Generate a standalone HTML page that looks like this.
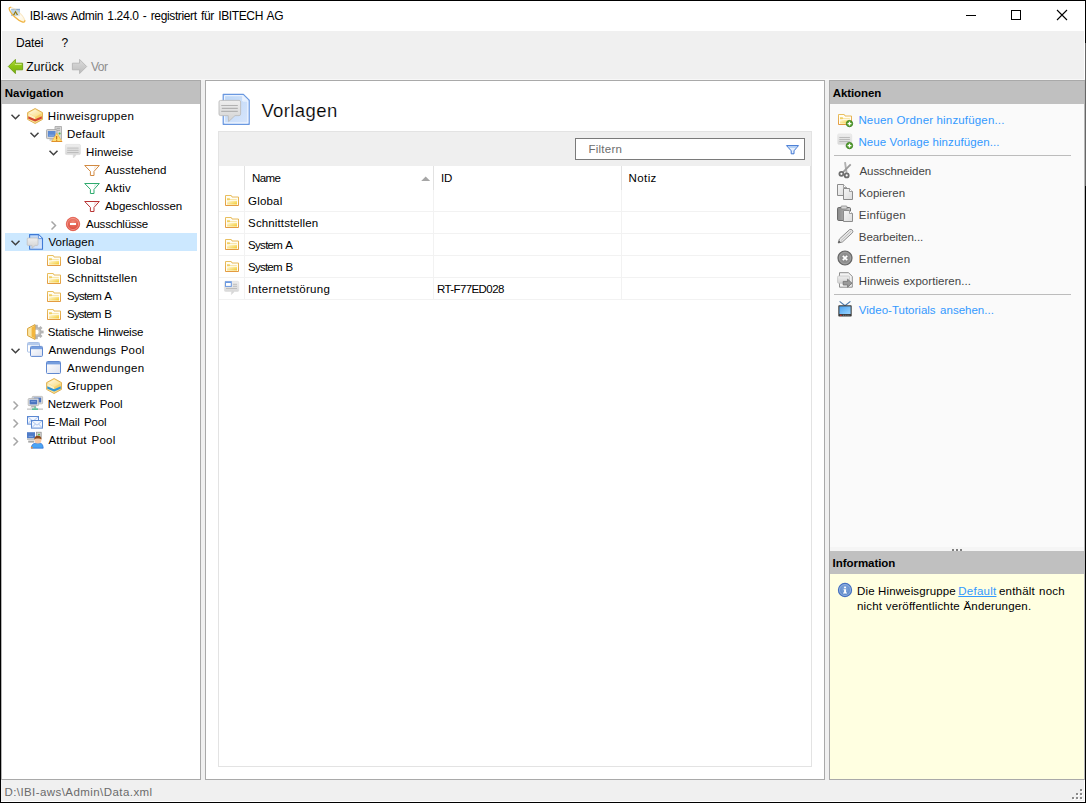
<!DOCTYPE html>
<html lang="de"><head><meta charset="utf-8"><title>IBI-aws Admin</title>
<style>
html,body{margin:0;padding:0}
body{width:1086px;height:803px;position:relative;overflow:hidden;background:#f0f0f0;font-family:"Liberation Sans",sans-serif;font-size:11.5px;color:#000}
.b{position:absolute;box-sizing:border-box}
.t{position:absolute;white-space:pre;color:#000}
.t.dis{color:#8d8d8d}
.t.ph{color:#6d6d6d}
.t.lnk{color:#3399ff}
.t.u{text-decoration:underline}
.t.act{color:#454545}
.t.st{color:#6b6b6b}
svg{position:absolute;overflow:visible}
.t.hd{-webkit-text-stroke:0.18px #fff}

</style></head><body>
<!-- window frame -->
<div class="b" style="left:0;top:0;width:1086px;height:803px;border:1px solid #000"></div>
<div class="b" style="left:1085px;top:43px;width:1px;height:143px;background:#666"></div>
<!-- title bar -->
<div class="b" style="left:1px;top:1px;width:1084px;height:30px;background:#fff"></div>
<div class="b" style="left:1px;top:31px;width:1px;height:49px;background:#fff"></div>
<div class="b" style="left:1084px;top:31px;width:1px;height:49px;background:#fff"></div>
<div class="b" style="left:1px;top:79px;width:1084px;height:1px;background:#f8f8f8"></div>
<!-- window controls -->
<div class="b" style="left:966px;top:15px;width:10px;height:1px;background:#000"></div>
<div class="b" style="left:1011px;top:10px;width:10px;height:10px;border:1px solid #000"></div>
<svg style="left:1057px;top:10px" width="10" height="10" viewBox="0 0 10 10"><path d="M0 0L10 10M10 0L0 10" stroke="#000" stroke-width="1.1" fill="none"/></svg>

<!-- left panel -->
<div class="b" style="left:1px;top:80px;width:200px;height:700px;background:#fff;border:1px solid #a9a9a9;border-left-color:#b5b5b5"></div>
<div class="b" style="left:2px;top:81px;width:198px;height:23px;background:#c0c0c0"></div>
<div class="b" style="left:5px;top:233px;width:192px;height:18px;background:#cce8ff"></div>

<!-- center panel -->
<div class="b" style="left:205px;top:80px;width:620px;height:700px;background:#fff;border:1px solid #a9a9a9"></div>
<div class="b" style="left:218px;top:131px;width:594px;height:636px;border:1px solid #e3e3e3;background:#fff"></div>
<div class="b" style="left:219px;top:132px;width:592px;height:34px;background:#efefef"></div>
<div class="b" style="left:575px;top:138px;width:230px;height:22px;background:#fff;border:1px solid #7a7a7a"></div>
<!-- header column separators -->
<div class="b" style="left:244px;top:166px;width:1px;height:24px;background:#e2e2e2"></div>
<div class="b" style="left:433px;top:166px;width:1px;height:24px;background:#e2e2e2"></div>
<div class="b" style="left:621px;top:166px;width:1px;height:24px;background:#e2e2e2"></div>
<div class="b" style="left:810px;top:166px;width:1px;height:24px;background:#e2e2e2"></div>
<!-- body column separators -->
<div class="b" style="left:244px;top:190px;width:1px;height:110px;background:#f2f2f2"></div>
<div class="b" style="left:433px;top:190px;width:1px;height:110px;background:#f2f2f2"></div>
<div class="b" style="left:621px;top:190px;width:1px;height:110px;background:#f2f2f2"></div>
<div class="b" style="left:810px;top:190px;width:1px;height:110px;background:#f2f2f2"></div>
<!-- row lines -->
<div class="b" style="left:219px;top:211px;width:592px;height:1px;background:#f2f2f2"></div>
<div class="b" style="left:219px;top:233px;width:592px;height:1px;background:#f2f2f2"></div>
<div class="b" style="left:219px;top:255px;width:592px;height:1px;background:#f2f2f2"></div>
<div class="b" style="left:219px;top:277px;width:592px;height:1px;background:#f2f2f2"></div>
<div class="b" style="left:219px;top:299px;width:592px;height:1px;background:#f2f2f2"></div>
<!-- sort arrow -->
<svg style="left:421px;top:176px" width="10" height="5" viewBox="0 0 10 5"><path d="M0.2 5L4.7 0.4L9.2 5Z" fill="#a6a6a6"/></svg>

<!-- right panel -->
<div class="b" style="left:829px;top:80px;width:256px;height:700px;background:#fafafa;border:1px solid #a9a9a9;border-right-color:#b8b8b8"></div>
<div class="b" style="left:830px;top:81px;width:254px;height:23px;background:#c0c0c0"></div>
<div class="b" style="left:834px;top:155px;width:237px;height:1px;background:#bcbcbc"></div>
<div class="b" style="left:834px;top:294px;width:237px;height:1px;background:#bcbcbc"></div>
<div class="b" style="left:830px;top:547px;width:254px;height:4px;background:#f5f5f5"></div>
<div class="b" style="left:952px;top:549px;width:2px;height:2px;background:#808080"></div>
<div class="b" style="left:956px;top:549px;width:2px;height:2px;background:#808080"></div>
<div class="b" style="left:960px;top:549px;width:2px;height:2px;background:#808080"></div>
<div class="b" style="left:830px;top:551px;width:254px;height:23px;background:#c0c0c0"></div>
<div class="b" style="left:830px;top:574px;width:254px;height:205px;background:#ffffe1"></div>

<!-- status bar -->
<div class="b" style="left:1px;top:801px;width:1084px;height:1px;background:#fff"></div>
<div class="b" style="left:1084px;top:780px;width:1px;height:22px;background:#fff"></div>
<!-- size grip -->
<svg style="left:1072px;top:788px" width="12" height="12" viewBox="0 0 12 12" shape-rendering="crispEdges">
<g fill="#fff"><rect x="9" y="2" width="2" height="2"/><rect x="5" y="6" width="2" height="2"/><rect x="9" y="6" width="2" height="2"/><rect x="1" y="10" width="2" height="2"/><rect x="5" y="10" width="2" height="2"/><rect x="9" y="10" width="2" height="2"/></g>
<g fill="#8c8c8c"><rect x="8" y="1" width="2" height="2"/><rect x="4" y="5" width="2" height="2"/><rect x="8" y="5" width="2" height="2"/><rect x="0" y="9" width="2" height="2"/><rect x="4" y="9" width="2" height="2"/><rect x="8" y="9" width="2" height="2"/></g>
</svg>
<svg style="left:0;top:0" width="1086" height="803" viewBox="0 0 1086 803">
<defs>
<linearGradient id="gFold" x1="0" y1="0" x2="1" y2="1"><stop offset="0" stop-color="#fffbe6"/><stop offset="1" stop-color="#f3c928"/></linearGradient>
<linearGradient id="gFoldS" x1="0" y1="0" x2="0" y2="1"><stop offset="0" stop-color="#e6b84e"/><stop offset="1" stop-color="#e0902c"/></linearGradient>
<linearGradient id="gGreen" x1="0" y1="0" x2="0" y2="1"><stop offset="0" stop-color="#b4dc3c"/><stop offset="0.5" stop-color="#8cc414"/><stop offset="1" stop-color="#7ab010"/></linearGradient>
<linearGradient id="gGray" x1="0" y1="0" x2="0" y2="1"><stop offset="0" stop-color="#dcdcdc"/><stop offset="1" stop-color="#bcbcbc"/></linearGradient>
<linearGradient id="gBub" x1="0" y1="0" x2="0" y2="1"><stop offset="0" stop-color="#eeeeee"/><stop offset="1" stop-color="#d2d2d2"/></linearGradient>
<linearGradient id="gPage" x1="0" y1="0" x2="1" y2="1"><stop offset="0" stop-color="#bcd6f6"/><stop offset="1" stop-color="#d8e6fc"/></linearGradient>
<linearGradient id="gWin" x1="0" y1="0" x2="1" y2="1"><stop offset="0" stop-color="#ffffff"/><stop offset="1" stop-color="#dde2f0"/></linearGradient>
<linearGradient id="gDoc" x1="0" y1="0" x2="1" y2="1"><stop offset="0" stop-color="#f6f6f6"/><stop offset="1" stop-color="#dcdcdc"/></linearGradient>
<linearGradient id="gClip" x1="0" y1="0" x2="1" y2="0"><stop offset="0" stop-color="#8a8a8a"/><stop offset="1" stop-color="#c4c4c4"/></linearGradient>
<linearGradient id="gTv" x1="0" y1="0" x2="1" y2="1"><stop offset="0" stop-color="#4aa2f0"/><stop offset="1" stop-color="#9ad4ff"/></linearGradient>
<radialGradient id="gRed" cx="0.5" cy="0.35" r="0.7"><stop offset="0" stop-color="#f08a78"/><stop offset="1" stop-color="#d83a2c"/></radialGradient>
<radialGradient id="gInfo" cx="0.5" cy="0.4" r="0.6"><stop offset="0" stop-color="#86aadc"/><stop offset="1" stop-color="#5480c4"/></radialGradient>
<linearGradient id="gLens" x1="0" y1="0" x2="1" y2="0"><stop offset="0" stop-color="#fff6dc" stop-opacity="0.2"/><stop offset="0.45" stop-color="#fff6dc" stop-opacity="0.35"/><stop offset="0.7" stop-color="#fffaf0" stop-opacity="0.95"/><stop offset="1" stop-color="#fff4d4" stop-opacity="1"/></linearGradient>
<linearGradient id="gHexT" x1="0" y1="0" x2="1" y2="1"><stop offset="0" stop-color="#fffae8"/><stop offset="1" stop-color="#f9dc7c"/></linearGradient>

<!-- 14x11 folder, origin top-left -->
<g id="folder">
 <path d="M0.5 0.5H6.3L7 2H13.5V10.5H0.5Z" fill="#fffdf3" stroke="url(#gFoldS)" stroke-width="0.9"/>
 <path d="M2 3.2H4.6L5.2 3.9H11.8V4.6H5.2L4.6 5.2H2Z" fill="#f1d064"/>
 <path d="M2 6.6L5.2 5.7H12V9.6H2Z" fill="url(#gFold)"/>
</g>
<!-- hex box 16x16 -->
<g id="hexbase">
 <path d="M8.1 0.5L15.5 4.6V11.4L8.1 15.5L0.6 11.4V4.6Z" fill="#f8dc8a" stroke="#dcaa4a" stroke-width="0.9" stroke-linejoin="round"/>
 <path d="M8.1 1.5L14.4 5L8.1 8.7L1.7 5Z" fill="url(#gHexT)"/>
 <path d="M1.5 5.6L8.1 9.3V11.4L1.5 8.4Z" fill="#fdf0c2"/>
 <path d="M14.7 5.6L8.1 9.3V11.4L14.7 8.4Z" fill="#f6d068"/>
 <path d="M1.5 11L8.1 13.9V14.6L1.5 11.4Z" fill="#fbe6a0"/>
</g>
<g id="chevD"><path d="M-4 -1.9L0 2.1L4 -1.9" fill="none" stroke="#404040" stroke-width="1.5"/></g>
<g id="chevR"><path d="M-2 -4L2 0L-2 4" fill="none" stroke="#a6a6a6" stroke-width="1.5"/></g>
<g id="funnel"><path d="M0.7 0.5H15.3L10 6.4V10.5H6.4V6.4Z" fill="#fff" stroke="currentColor" stroke-width="1" stroke-linejoin="round"/><path d="M9.6 5.2L13.4 1.3H10.5Z" fill="currentColor" opacity="0.18"/></g>
<g id="plus"><circle cx="0" cy="0" r="3.15" fill="#5aa432" stroke="#357a1c" stroke-width="0.9"/><path d="M-1.9 0H1.9M0 -1.9V1.9" stroke="#fff" stroke-width="1.3"/></g>
<g id="doc"><path d="M0.5 0.5H6.5L9.5 3.5V11.5H0.5Z" fill="url(#gDoc)" stroke="#8c8c8c" stroke-width="1"/><path d="M6.5 0.5V3.5H9.5" fill="#fff" stroke="#8c8c8c" stroke-width="0.8"/></g>
</defs>

<!-- title icon -->
<rect x="11.2" y="9" width="8.8" height="6.9" fill="#a6caf2"/>
<path d="M11.2 9.3H20" stroke="#7c9cc0" stroke-width="0.9"/>
<path d="M11.2 15.6H20" stroke="#8db0dc" stroke-width="0.6"/>
<g transform="rotate(43 17 14.7) translate(17 14.7)">
 <ellipse cx="0" cy="0" rx="10.3" ry="3.2" fill="url(#gLens)" stroke="#f6d79a" stroke-opacity="0.55" stroke-width="1"/>
 <path d="M9.3 -1.4A10.3 3.2 0 1 1 -9.3 -1.4" fill="none" stroke="#f0b444" stroke-width="1.15"/>
</g>
<path d="M15.5 10.4L18.2 15H16.7L15.5 12.7L14.5 15H13Z" fill="#947c14"/>
<!-- toolbar arrows -->
<path d="M8.3 66.5L15.4 59.4V63.2H22.6V69.8H15.4V73.6Z" fill="url(#gGreen)" stroke="#6d9e14" stroke-width="0.9" stroke-linejoin="round"/>
<path d="M14.9 64.4H21.6" stroke="#d6ee8c" stroke-width="1"/>
<path d="M86.7 66.5L79.6 59.4V63.2H72.4V69.8H79.6V73.6Z" fill="url(#gGray)" stroke="#b4b4b4" stroke-width="0.9" stroke-linejoin="round"/>

<!-- tree chevrons -->
<use href="#chevD" x="15.5" y="116.6"/>
<use href="#chevD" x="34.5" y="134.6"/>
<use href="#chevD" x="53.5" y="152.6"/>
<use href="#chevR" x="53.5" y="225.5"/>
<use href="#chevD" x="15.5" y="242.6"/>
<use href="#chevD" x="15.5" y="350.6"/>
<use href="#chevR" x="15.5" y="405.5"/>
<use href="#chevR" x="15.5" y="423.5"/>
<use href="#chevR" x="15.5" y="441.5"/>

<!-- Hinweisgruppen -->
<g transform="translate(27 108)"><use href="#hexbase"/><path d="M1.3 8.3L8.1 11.2L14.8 8.3V10.7L8.1 13.6L1.3 10.7Z" fill="#d4462f"/></g>
<!-- Default: tower + monitor + warning -->
<g transform="translate(46 126)">
 <path d="M9 0.5H15.5V13.5H9Z" fill="#d6d6d6" stroke="#a4a4a4" stroke-width="0.8"/>
 <path d="M10.5 2.3H14M10.5 4.3H14" stroke="#9a9a9a" stroke-width="0.8"/>
 <circle cx="13.6" cy="7.4" r="1" fill="#48b848"/>
 <rect x="0.5" y="3.6" width="10.4" height="9" rx="0.8" fill="#d8d8d8" stroke="#a0a0a0" stroke-width="0.8"/>
 <rect x="1.9" y="5" width="7.6" height="5.8" fill="#5c8ad2"/>
 <path d="M3 9.2H8" stroke="#8fb2e6" stroke-width="0.8"/>
 <path d="M3.5 13.2H8.5V14.6H3.5Z" fill="#bcbcbc"/>
 <path d="M10.8 7.2L16 15.5H5.8Z" fill="#ffe070" stroke="#eeb450" stroke-width="0.8" stroke-linejoin="round"/><path d="M5.6 15.5H16.1" stroke="#e0902a" stroke-width="1"/>
 <path d="M10.6 10V13" stroke="#c8741a" stroke-width="1.3"/><rect x="10" y="13.6" width="1.3" height="1.1" fill="#c8741a"/>
</g>
<!-- Hinweise bubble -->
<g transform="translate(65 144)">
 <path d="M1.6 0.4H14.2Q15.4 0.4 15.4 1.6V9.4Q15.4 10.6 14.2 10.6H11.6L8.4 14L8.2 10.6H1.6Q0.4 10.6 0.4 9.4V1.6Q0.4 0.4 1.6 0.4Z" fill="url(#gBub)" stroke="#dadada" stroke-width="0.6"/>
 <path d="M2.2 4.1H13.6M2.2 6.3H13.6M2.2 8.5H13.6" stroke="#b9b9b9" stroke-width="0.9"/>
</g>
<!-- funnels -->
<g transform="translate(84 165)" color="#d28a42"><use href="#funnel"/></g>
<g transform="translate(84 183)" color="#2fab6e"><use href="#funnel"/></g>
<g transform="translate(84 201)" color="#b83434"><use href="#funnel"/></g>
<!-- Ausschluesse -->
<circle cx="73" cy="224" r="6.7" fill="url(#gRed)" stroke="#e2594a" stroke-width="0.8"/>
<circle cx="73" cy="224" r="5.6" fill="none" stroke="#f4a89c" stroke-width="0.7"/>
<rect x="70" y="223" width="6" height="2" fill="#fff"/>
<!-- Vorlagen (small) -->
<g transform="translate(27 234)">
 <path d="M2.6 0.6H11.6L15.5 4.4V15.3H2.6Z" fill="url(#gPage)" stroke="#3f7ad6" stroke-width="1.1" stroke-linejoin="round"/>
 <path d="M11.4 1V4.6H15" fill="#e6f0fe" stroke="#3f7ad6" stroke-width="0.7"/>
 <path d="M1.2 4H10Q11 4 11 5V10.4Q11 11.4 10 11.4H8.2L5 14.2V11.4H1.2Q0.2 11.4 0.2 10.4V5Q0.2 4 1.2 4Z" fill="url(#gBub)" stroke="#bdbdbd" stroke-width="0.7"/>
</g>
<!-- tree folders -->
<use href="#folder" x="47" y="255"/>
<use href="#folder" x="47" y="273"/>
<use href="#folder" x="47" y="291"/>
<use href="#folder" x="47" y="309"/>
<!-- Statische Hinweise -->
<g transform="translate(27 324)">
 <g fill="#b4b4b4"><circle cx="9.4" cy="8" r="5.2"/>
 <rect x="8" y="0.8" width="2.8" height="14.4"/><rect x="8" y="0.8" width="2.8" height="14.4" transform="rotate(45 9.4 8)"/><rect x="8" y="0.8" width="2.8" height="14.4" transform="rotate(90 9.4 8)"/><rect x="8" y="0.8" width="2.8" height="14.4" transform="rotate(135 9.4 8)"/></g>
 <circle cx="9.4" cy="8" r="3.6" fill="#c8c8c8"/><circle cx="9.4" cy="8" r="2.2" fill="#fff"/>
 <path d="M8 0.6V15.4L0.6 11.6V4.5Z" fill="#fbe6a4" stroke="#d9a23a" stroke-width="1" stroke-linejoin="round"/>
 <path d="M8 1.6V14.4L4.6 12.6V3.4Z" fill="#f3b63e"/>
</g>
<!-- Anwendungs Pool -->
<g transform="translate(27 342)">
 <rect x="0.5" y="0.5" width="12" height="9.6" rx="1" fill="#fff" stroke="#a9c0e6" stroke-width="1"/>
 <rect x="1" y="1" width="11" height="2.2" fill="#b4caec"/>
 <rect x="3.5" y="4.4" width="12" height="10" rx="1" fill="url(#gWin)" stroke="#5f88d0" stroke-width="1"/>
 <rect x="4" y="4.9" width="11" height="2.3" fill="#769ede"/>
</g>
<!-- Anwendungen -->
<g transform="translate(46 361)">
 <rect x="0.5" y="0.5" width="14" height="12" rx="1" fill="url(#gWin)" stroke="#5f88d0" stroke-width="1"/>
 <rect x="1" y="1" width="13" height="2.4" fill="#769ede"/>
</g>
<!-- Gruppen -->
<g transform="translate(46 378)"><use href="#hexbase"/><path d="M1.3 8.3L8.1 11.2L14.8 8.3V10.7L8.1 13.6L1.3 10.7Z" fill="#2f95d6"/></g>
<!-- Netzwerk Pool -->
<g transform="translate(27 396)">
 <rect x="5.2" y="0.4" width="10.4" height="7.4" rx="0.8" fill="#e2e2e2" stroke="#b6b6b6" stroke-width="0.8"/>
 <rect x="6.6" y="1.6" width="7.6" height="4.8" fill="#4a74c0"/>
 <rect x="1.2" y="2.6" width="10.4" height="7" rx="0.8" fill="#e4e4e4" stroke="#b0b0b0" stroke-width="0.8"/>
 <rect x="2.6" y="3.8" width="7.6" height="4.6" fill="#4a74c0"/>
 <path d="M4 5.6H8.8" stroke="#86a6e0" stroke-width="0.8"/>
 <path d="M4.4 10H8.6L9.6 11.4H3.4Z" fill="#b4b4b4"/>
 <rect x="0" y="12.4" width="16" height="1.5" fill="#cdcdcd"/>
 <rect x="5" y="12.4" width="6" height="1.5" fill="#52c090"/><rect x="7.4" y="10.6" width="1.3" height="2" fill="#52c090"/>
</g>
<!-- E-Mail Pool -->
<g transform="translate(27 416)">
 <rect x="0.5" y="0.5" width="11" height="7.6" fill="#f2f7ff" stroke="#5a88d2" stroke-width="1"/>
 <path d="M1 1L6 5.2L11 1M1 7.6L4.4 4M11 7.6L7.6 4" fill="none" stroke="#9ab8e8" stroke-width="0.8"/>
 <rect x="4.5" y="4.5" width="11" height="7.6" fill="#f2f7ff" stroke="#5a88d2" stroke-width="1"/>
 <path d="M5 5L10 9.2L15 5M5 11.6L8.4 8M15 11.6L11.6 8" fill="none" stroke="#9ab8e8" stroke-width="0.8"/>
</g>
<!-- Attribut Pool -->
<g transform="translate(27 432)">
 <rect x="0" y="0.2" width="8" height="6.2" fill="#4f7cc8"/><path d="M1.6 4.4H6" stroke="#8eaee4" stroke-width="0.8"/>
 <rect x="0" y="6.4" width="8" height="1.6" fill="#c4c4c4"/><rect x="1.2" y="8.6" width="6" height="2" fill="#a8a8a8"/>
 <rect x="9.4" y="0.2" width="4.8" height="6" fill="#d0d0d0" stroke="#8c8c8c" stroke-width="0.7"/><circle cx="12" cy="2.6" r="0.9" fill="#3cb83c"/>
 <path d="M4.2 16.2Q4.6 11.4 8.6 11.2H13Q16 11.4 16.2 16.2Z" fill="#4aa4f4" stroke="#2c6cd0" stroke-width="0.7"/>
 <rect x="4" y="14.8" width="1.6" height="1.6" fill="#f09030"/>
 <circle cx="10.9" cy="7.9" r="3.5" fill="#f6c8a4"/>
 <path d="M7.2 7.6Q7.4 3.6 10.9 3.8Q14.4 3.6 14.6 7.6Q12.6 6 10.9 6.6Q9 6 7.2 7.6Z" fill="#8c4a1c"/>
</g>

<!-- big Vorlagen icon -->
<g transform="translate(218 93)">
 <path d="M5.2 1.3H25.4L31.2 7.2V31.3H5.2Z" fill="url(#gPage)" stroke="#6a98e0" stroke-width="1.2" stroke-linejoin="round"/>
 <path d="M6.6 2.7H24.8V8H29.8V29.9H6.6Z" fill="none" stroke="#f2f7ff" stroke-width="1"/>
 <path d="M25 2.2L25 7.6H30.4Z" fill="#eaf2fe"/>
 <path d="M2.6 7.4H21Q22.6 7.4 22.6 9V21Q22.6 22.6 21 22.6H17L10.6 28.6L10.2 22.6H2.6Q1 22.6 1 21V9Q1 7.4 2.6 7.4Z" fill="url(#gBub)" stroke="#bcbcbc" stroke-width="0.9"/>
 <path d="M3.2 12.5H19.8M3.8 15.4H19.8M3.2 18.4H19.8" stroke="#b2b2b2" stroke-width="1.1"/>
</g>
<!-- filter funnel -->
<path d="M786.5 145.6H798.5L794 150.8V153.8H791.2V150.8Z" fill="#e8f1fd" stroke="#3d74d2" stroke-width="1" stroke-linejoin="round"/>
<path d="M787.6 146.3H797.4L796 147.8H789Z" fill="#a9c8f2"/>
<!-- table icons -->
<use href="#folder" x="225" y="195"/>
<use href="#folder" x="225" y="217"/>
<use href="#folder" x="225" y="239"/>
<use href="#folder" x="225" y="261"/>
<g transform="translate(224 281)">
 <path d="M1.6 0.3H13.4Q14.8 0.3 14.8 1.6V9.2Q14.8 10.5 13.4 10.5H10.6L7.4 13.6V10.5H1.6Q0.4 10.5 0.4 9.2V1.6Q0.4 0.3 1.6 0.3Z" fill="url(#gBub)" stroke="#dcdcdc" stroke-width="0.6"/>
 <rect x="1" y="0.2" width="6.8" height="5.7" fill="#6c9ae2"/><rect x="2" y="2" width="4.8" height="2.9" fill="#fff"/>
 <path d="M9 3.3H13M9 5.3H13M2 7.5H13" stroke="#b9b9b9" stroke-width="0.9"/>
</g>

<!-- action icons -->
<use href="#folder" x="838" y="114"/><use href="#plus" x="849.5" y="123.6"/>
<g transform="translate(837.5 133.6)">
 <path d="M1.4 0.3H13Q14.2 0.3 14.2 1.5V9.7Q14.2 10.9 13 10.9H10.4L7.6 13.6V10.9H1.4Q0.2 10.9 0.2 9.7V1.5Q0.2 0.3 1.4 0.3Z" fill="url(#gBub)" stroke="#e0e0e0" stroke-width="0.6"/>
 <path d="M1.8 3.9H12.4M1.8 5.9H12.4M1.8 7.9H12.4" stroke="#b6b6b6" stroke-width="0.9"/>
</g><use href="#plus" x="849.5" y="145.6"/>
<!-- scissors -->
<g fill="none">
 <path d="M845 162.2L846.6 173" stroke="#b2b2b2" stroke-width="1.9"/>
 <path d="M850.7 164.4L842.6 172.6" stroke="#9c9c9c" stroke-width="1.8"/>
 <circle cx="841.4" cy="173.8" r="2" stroke="#6e6e6e" stroke-width="1.8"/>
 <circle cx="846.7" cy="175.4" r="2" stroke="#6e6e6e" stroke-width="1.8"/>
</g>
<!-- copy -->
<use href="#doc" x="837" y="184"/><use href="#doc" x="843" y="188"/>
<!-- paste -->
<rect x="837.5" y="207.5" width="13" height="13" rx="1.2" fill="url(#gClip)" stroke="#6c6c6c" stroke-width="1"/>
<rect x="841" y="206" width="6" height="3" rx="0.8" fill="#d8d8d8" stroke="#7a7a7a" stroke-width="0.7"/>
<use href="#doc" x="843" y="210"/>
<!-- pencil -->
<path d="M838.2 243L839.4 239L849.6 229.6Q851 228.8 852.4 230.2Q853.4 231.6 852.4 232.8L842.4 242Z" fill="#e6e6e6" stroke="#828282" stroke-width="0.9" stroke-linejoin="round"/>
<path d="M838.2 243L839 240.6L840.6 242.2Z" fill="#4a4a4a"/>
<path d="M841 240.6L851 231.2" stroke="#b4b4b4" stroke-width="0.8"/>
<!-- remove -->
<circle cx="845" cy="258" r="7" fill="#8e8e8e" stroke="#666" stroke-width="1.2"/>
<circle cx="845" cy="258" r="5.6" fill="none" stroke="#a8a8a8" stroke-width="0.7"/>
<path d="M842.8 255.8L847.2 260.2M847.2 255.8L842.8 260.2" stroke="#fff" stroke-width="1.7"/>
<!-- export -->
<path d="M839.5 272.7H848.4L852.3 276.4V287.2H839.5Z" fill="#f4f4f4" stroke="#828282" stroke-width="0.9"/>
<path d="M838.6 276H848.4Q849.6 276 849.6 277.2V282Q849.6 283.2 848.4 283.2H838.6Q837.6 283.2 837.6 282V277.2Q837.6 276 838.6 276Z" fill="url(#gBub)" stroke="#bdbdbd" stroke-width="0.7"/>
<path d="M843.2 281.4H847.6V279.2L852 283.2L847.6 287.2V285H843.2Z" fill="#9a9a9a" stroke="#6e6e6e" stroke-width="0.8" stroke-linejoin="round"/>
<!-- tv -->
<path d="M839.6 301.4L845 305.8L850.4 301.4" fill="none" stroke="#4a78a8" stroke-width="1.1"/>
<rect x="838.3" y="305.3" width="13.4" height="11.2" rx="0.8" fill="#3c3c3c"/>
<rect x="839.4" y="306.4" width="11.2" height="7.6" fill="url(#gTv)"/>
<rect x="840" y="314.8" width="1.6" height="1" fill="#e03030"/><path d="M843 315.3H850" stroke="#8a8a8a" stroke-width="0.8" stroke-dasharray="1 0.8"/>
<!-- info -->
<circle cx="845" cy="590" r="6.6" fill="url(#gInfo)" stroke="#446fc0" stroke-width="1.1"/>
<circle cx="845" cy="590" r="5.5" fill="none" stroke="#a4c0ea" stroke-width="0.7"/>
<rect x="844.1" y="586.6" width="1.9" height="1.6" fill="#fff"/>
<path d="M843.6 589.2H846V592.6H847V593.6H843V592.6H844.1V590.1H843.6Z" fill="#fff"/>
</svg>


<span class="t" style="left:29.80px;top:8.00px;letter-spacing:-0.363px;line-height:17px;word-spacing:1.3px;font-size:12px">IBI-aws Admin 1.24.0 - registriert für IBITECH AG</span>
<span class="t" style="left:16.00px;top:35.00px;letter-spacing:-0.123px;line-height:17px;font-size:12px">Datei</span>
<span class="t" style="left:61.60px;top:35.00px;letter-spacing:-0.787px;line-height:17px;font-size:12px">?</span>
<span class="t" style="left:26.20px;top:59.00px;letter-spacing:0.174px;line-height:17px;font-size:12px">Zurück</span>
<span class="t dis" style="left:91.08px;top:59.00px;letter-spacing:-0.549px;line-height:17px;font-size:12px">Vor</span>
<span class="t" style="left:4.83px;top:85.00px;letter-spacing:-0.015px;line-height:16px;font-weight:bold">Navigation</span>
<span class="t" style="left:832.82px;top:85.00px;letter-spacing:-0.107px;line-height:16px;font-weight:bold">Aktionen</span>
<span class="t" style="left:832.62px;top:555.00px;letter-spacing:-0.055px;line-height:16px;font-weight:bold">Information</span>
<span class="t" style="left:47.82px;top:108.00px;letter-spacing:0.270px;line-height:16px">Hinweisgruppen</span>
<span class="t" style="left:67.03px;top:126.00px;letter-spacing:0.202px;line-height:16px">Default</span>
<span class="t" style="left:86.03px;top:144.00px;letter-spacing:0.060px;line-height:16px">Hinweise</span>
<span class="t" style="left:105.03px;top:162.00px;letter-spacing:0.080px;line-height:16px">Ausstehend</span>
<span class="t" style="left:105.03px;top:180.00px;letter-spacing:0.226px;line-height:16px">Aktiv</span>
<span class="t" style="left:105.03px;top:198.00px;letter-spacing:-0.075px;line-height:16px">Abgeschlossen</span>
<span class="t" style="left:86.03px;top:216.00px;letter-spacing:-0.231px;line-height:16px">Ausschlüsse</span>
<span class="t" style="left:48.42px;top:234.00px;letter-spacing:0.034px;line-height:16px">Vorlagen</span>
<span class="t" style="left:67.03px;top:252.00px;letter-spacing:0.200px;line-height:16px">Global</span>
<span class="t" style="left:67.03px;top:270.00px;letter-spacing:0.125px;line-height:16px">Schnittstellen</span>
<span class="t" style="left:67.03px;top:288.00px;letter-spacing:-0.716px;line-height:16px;word-spacing:1.3px">System A</span>
<span class="t" style="left:67.03px;top:306.00px;letter-spacing:-0.794px;line-height:16px;word-spacing:1.3px">System B</span>
<span class="t" style="left:47.82px;top:324.00px;letter-spacing:-0.164px;line-height:16px;word-spacing:1.3px">Statische Hinweise</span>
<span class="t" style="left:48.42px;top:342.00px;letter-spacing:0.129px;line-height:16px;word-spacing:1.3px">Anwendungs Pool</span>
<span class="t" style="left:67.03px;top:360.00px;letter-spacing:0.364px;line-height:16px">Anwendungen</span>
<span class="t" style="left:67.03px;top:378.00px;letter-spacing:0.155px;line-height:16px">Gruppen</span>
<span class="t" style="left:47.82px;top:396.00px;letter-spacing:-0.061px;line-height:16px;word-spacing:1.3px">Netzwerk Pool</span>
<span class="t" style="left:47.82px;top:414.00px;letter-spacing:-0.133px;line-height:16px;word-spacing:1.3px">E-Mail Pool</span>
<span class="t" style="left:48.42px;top:432.00px;letter-spacing:0.238px;line-height:16px;word-spacing:1.3px">Attribut Pool</span>
<span class="t hd" style="left:261.40px;top:98.00px;letter-spacing:0.395px;line-height:26px;font-size:18.5px">Vorlagen</span>
<span class="t ph" style="left:588.42px;top:141.00px;letter-spacing:0.271px;line-height:16px">Filtern</span>
<span class="t" style="left:251.93px;top:170.00px;letter-spacing:-0.544px;line-height:16px">Name</span>
<span class="t" style="left:441.03px;top:170.00px;letter-spacing:-0.225px;line-height:16px">ID</span>
<span class="t" style="left:628.52px;top:170.00px;letter-spacing:0.409px;line-height:16px">Notiz</span>
<span class="t" style="left:248.12px;top:193.00px;letter-spacing:0.167px;line-height:16px">Global</span>
<span class="t" style="left:248.12px;top:215.00px;letter-spacing:0.125px;line-height:16px">Schnittstellen</span>
<span class="t" style="left:248.12px;top:237.00px;letter-spacing:-0.716px;line-height:16px;word-spacing:1.3px">System A</span>
<span class="t" style="left:248.12px;top:259.00px;letter-spacing:-0.794px;line-height:16px;word-spacing:1.3px">System B</span>
<span class="t" style="left:248.12px;top:281.00px;letter-spacing:0.319px;line-height:16px">Internetstörung</span>
<span class="t" style="left:436.93px;top:281.00px;letter-spacing:-0.586px;line-height:16px">RT-F77ED028</span>
<span class="t lnk" style="left:858.38px;top:112.00px;letter-spacing:0.162px;line-height:16px;word-spacing:0px">Neuen Ordner hinzufügen...</span>
<span class="t lnk" style="left:858.38px;top:134.00px;letter-spacing:0.092px;line-height:16px;word-spacing:0px">Neue Vorlage hinzufügen...</span>
<span class="t act" style="left:859.42px;top:163.00px;letter-spacing:-0.048px;line-height:16px">Ausschneiden</span>
<span class="t act" style="left:858.82px;top:185.00px;letter-spacing:0.025px;line-height:16px">Kopieren</span>
<span class="t act" style="left:858.82px;top:207.00px;letter-spacing:0.218px;line-height:16px">Einfügen</span>
<span class="t act" style="left:858.82px;top:229.00px;letter-spacing:-0.067px;line-height:16px">Bearbeiten...</span>
<span class="t act" style="left:858.82px;top:251.00px;letter-spacing:0.175px;line-height:16px">Entfernen</span>
<span class="t act" style="left:858.82px;top:273.00px;letter-spacing:0.049px;line-height:16px;word-spacing:0.5px">Hinweis exportieren...</span>
<span class="t lnk" style="left:858.82px;top:302.00px;letter-spacing:0.005px;line-height:16px;word-spacing:1.3px">Video-Tutorials ansehen...</span>
<span class="t" style="left:857.02px;top:583.00px;letter-spacing:0.136px;line-height:16px;word-spacing:0px">Die Hinweisgruppe</span>
<span class="t lnk u" style="left:958.32px;top:583.00px;letter-spacing:0.245px;line-height:16px">Default</span>
<span class="t" style="left:999.02px;top:583.00px;letter-spacing:0.190px;line-height:16px;word-spacing:0.8px">enthält noch</span>
<span class="t" style="left:857.02px;top:598.00px;letter-spacing:0.173px;line-height:16px;word-spacing:0.3px">nicht veröffentlichte Änderungen.</span>
<span class="t st" style="left:4.42px;top:784.00px;letter-spacing:0.430px;line-height:16px">D:\IBI-aws\Admin\Data.xml</span>
</body></html>
